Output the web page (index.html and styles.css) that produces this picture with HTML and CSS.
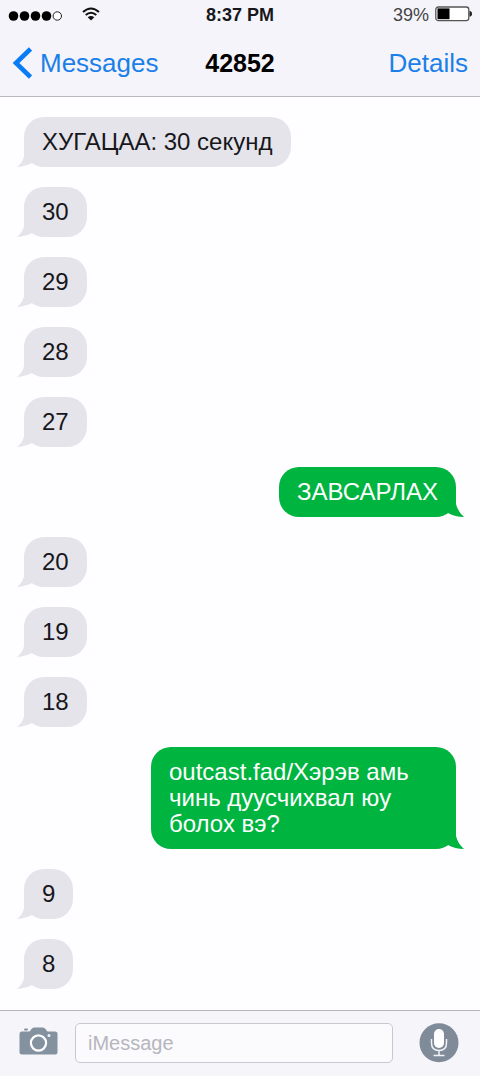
FILE: index.html
```html
<!DOCTYPE html>
<html lang="mn">
<head>
<meta charset="utf-8">
<meta name="viewport" content="width=device-width, initial-scale=1">
<title>42852</title>
<link rel="stylesheet" href="styles.css">
</head>
<body>
<div class="phone">
  <header class="header">
    <div class="status">
      <div class="status-left">
        <svg width="54" height="14" viewBox="0 0 54 14" aria-hidden="true">
          <circle cx="5.500" cy="9" r="4.800"/><circle cx="16.500" cy="9" r="4.800"/><circle cx="27.500" cy="9" r="4.800"/><circle cx="38.500" cy="9" r="4.800"/>
          <circle cx="49.300" cy="9" r="4.200" fill="#fff" stroke="#222" stroke-width="1"/>
        </svg>
        <svg width="18" height="14" viewBox="0 0 18 14" aria-hidden="true">
          <path d="M1 5Q9-2 17 5M3.7 8Q9 3.4 14.3 8" fill="none" stroke="#111" stroke-width="2"/>
          <path d="M5.7 10.300Q9 7.500 12.3 10.300L9 13.500z" fill="#111"/>
        </svg>
      </div>
      <time class="clock">8:37 PM</time>
      <div class="status-right">
        <span>39%</span>
        <svg width="37" height="16" viewBox="0 0 37 16" aria-hidden="true">
          <rect x=".8" y="1" width="33" height="13.6" rx="2.5" fill="#fff" stroke="#555" stroke-width="1.3"/>
          <rect x="2.5" y="2.4" width="12" height="10.8" fill="#000"/>
          <path d="M34.5 5Q37 5 37 7.8T34.5 10.6z" fill="#222"/>
        </svg>
      </div>
    </div>
    <nav class="nav">
      <a class="nav-link" href="#messages">
        <svg width="20" height="32" viewBox="0 0 20 32" aria-hidden="true"><path d="M18.500 2L4 16L18.500 30" fill="none" stroke="#087cf5" stroke-width="4.600"/></svg>
        <span>Messages</span>
      </a>
      <h1 class="title">42852</h1>
      <a class="nav-link nav-end" href="#details">Details</a>
    </nav>
  </header>

  <main class="thread">
    <p class="bubble in">ХУГАЦАА: 30 секунд</p>
    <p class="bubble in">30</p>
    <p class="bubble in">29</p>
    <p class="bubble in">28</p>
    <p class="bubble in">27</p>
    <p class="bubble out">ЗАВСАРЛАХ</p>
    <p class="bubble in">20</p>
    <p class="bubble in">19</p>
    <p class="bubble in">18</p>
    <p class="bubble out">outcast.fad/Хэрэв амь чинь дуусчихвал юу болох вэ?</p>
    <p class="bubble in">9</p>
    <p class="bubble in">8</p>
  </main>

  <form class="composer">
    <button class="icon-button camera" type="button" aria-label="Camera">
      <svg width="39" height="28" viewBox="0 0 39 28">
        <path d="M2.500 4.500H10.500L13 1.500Q14 .5 15.500 .5H23.500Q25 .5 26 1.500L28.500 4.500H36Q38.500 4.500 38.500 7V25Q38.500 27.500 36 27.500H3Q.5 27.500 .5 25V7Q.5 4.500 2.500 4.500z" fill="#84919f"/>
        <rect x="5" y="1.500" width="4" height="2" rx="1" fill="#84919f"/>
        <circle cx="19.500" cy="16" r="7.600" fill="none" stroke="#fff" stroke-width="2.200"/>
        <circle cx="30" cy="8.500" r="1.500" fill="#f0f2f6"/>
      </svg>
    </button>
    <input class="field" type="text" placeholder="iMessage" aria-label="iMessage">
    <button class="icon-button" type="button" aria-label="Record audio">
      <svg width="40" height="40" viewBox="0 0 40 40">
        <circle cx="20" cy="19.700" r="19.500" fill="#808b99"/>
        <rect x="15" y="6" width="10" height="19" rx="5" fill="#fff"/>
        <path d="M12.500 16V20Q12.500 27.500 20 27.500T27.500 20V16M20 27.500V32.500M14.500 32.500H25.500" fill="none" stroke="#f0f2f5" stroke-width="1.500"/>
      </svg>
    </button>
  </form>
</div>
</body>
</html>
```

FILE: styles.css
```css
* {
  box-sizing: border-box;
}

body {
  margin: 0;
  background: #fefdff;
  color: #17171c;
  font-family: "Liberation Sans", Arial, sans-serif;
}

.phone {
  display: flex;
  flex-direction: column;
  min-height: 100vh;
}

.header {
  background: #f5f4fa;
  border-bottom: 1px solid #b9b9be;
}

.status,
.nav {
  display: grid;
  grid-template-columns: 1fr auto 1fr;
  align-items: center;
}

.status {
  height: 30px;
  padding: 0 8px;
  font-size: 18px;
}

.status-left,
.status-right {
  display: flex;
  align-items: center;
}

.status-left {
  gap: 20px;
}

.status-right {
  justify-content: flex-end;
  gap: 6px;
  color: #444;
}

.status svg {
  margin-bottom: 3px;
}

.clock {
  font-weight: bold;
}

.nav {
  height: 66px;
  padding: 0 12px;
}

.nav-link {
  display: flex;
  align-items: center;
  gap: 8px;
  color: #1a7fe8;
  font-size: 26px;
  text-decoration: none;
}

.nav-end {
  justify-content: flex-end;
}

.title {
  margin: 0;
  color: #000;
  font-size: 25px;
}

.thread {
  display: flex;
  flex: 1;
  flex-direction: column;
  align-items: flex-start;
  gap: 20px;
  padding: 20px 24px;
}

.bubble {
  position: relative;
  max-width: 305px;
  margin: 0;
  padding: 12px 18px;
  border-radius: 20px;
  font-size: 24px;
  line-height: 26px;
}

.bubble::after {
  content: "";
  position: absolute;
  bottom: 0;
  width: 24px;
  height: 20px;
  background: inherit;
}

.in {
  background: #e5e4ea;
}

.in::after {
  left: -7px;
  clip-path: path("M7 0V9Q6 15 0 20Q9 19 15 16L24 18V0z");
}

.out {
  align-self: flex-end;
  background: #00b440;
  color: #fff;
}

.out::after {
  right: -8px;
  clip-path: path("M16 0V7Q18 15 24 20Q15 20 8 16L0 18V0z");
}

.composer {
  display: flex;
  align-items: center;
  gap: 17px;
  padding: 12px 21px 13px 19px;
  background: #f5f5fa;
  border-top: 1px solid #b4b4b9;
}

.icon-button {
  display: flex;
  padding: 0;
  border: 0;
  background: none;
}

.camera {
  margin-bottom: 4px;
}

.field {
  flex: 1;
  min-width: 0;
  height: 40px;
  margin-right: 9px;
  padding: 0 12px;
  border: 1px solid #c8c8cf;
  border-radius: 5px;
  background: #fbfafd;
  font: 20px "Liberation Sans", Arial, sans-serif;
}

.field::placeholder {
  color: #b6b6bd;
  opacity: 1;
}
```
